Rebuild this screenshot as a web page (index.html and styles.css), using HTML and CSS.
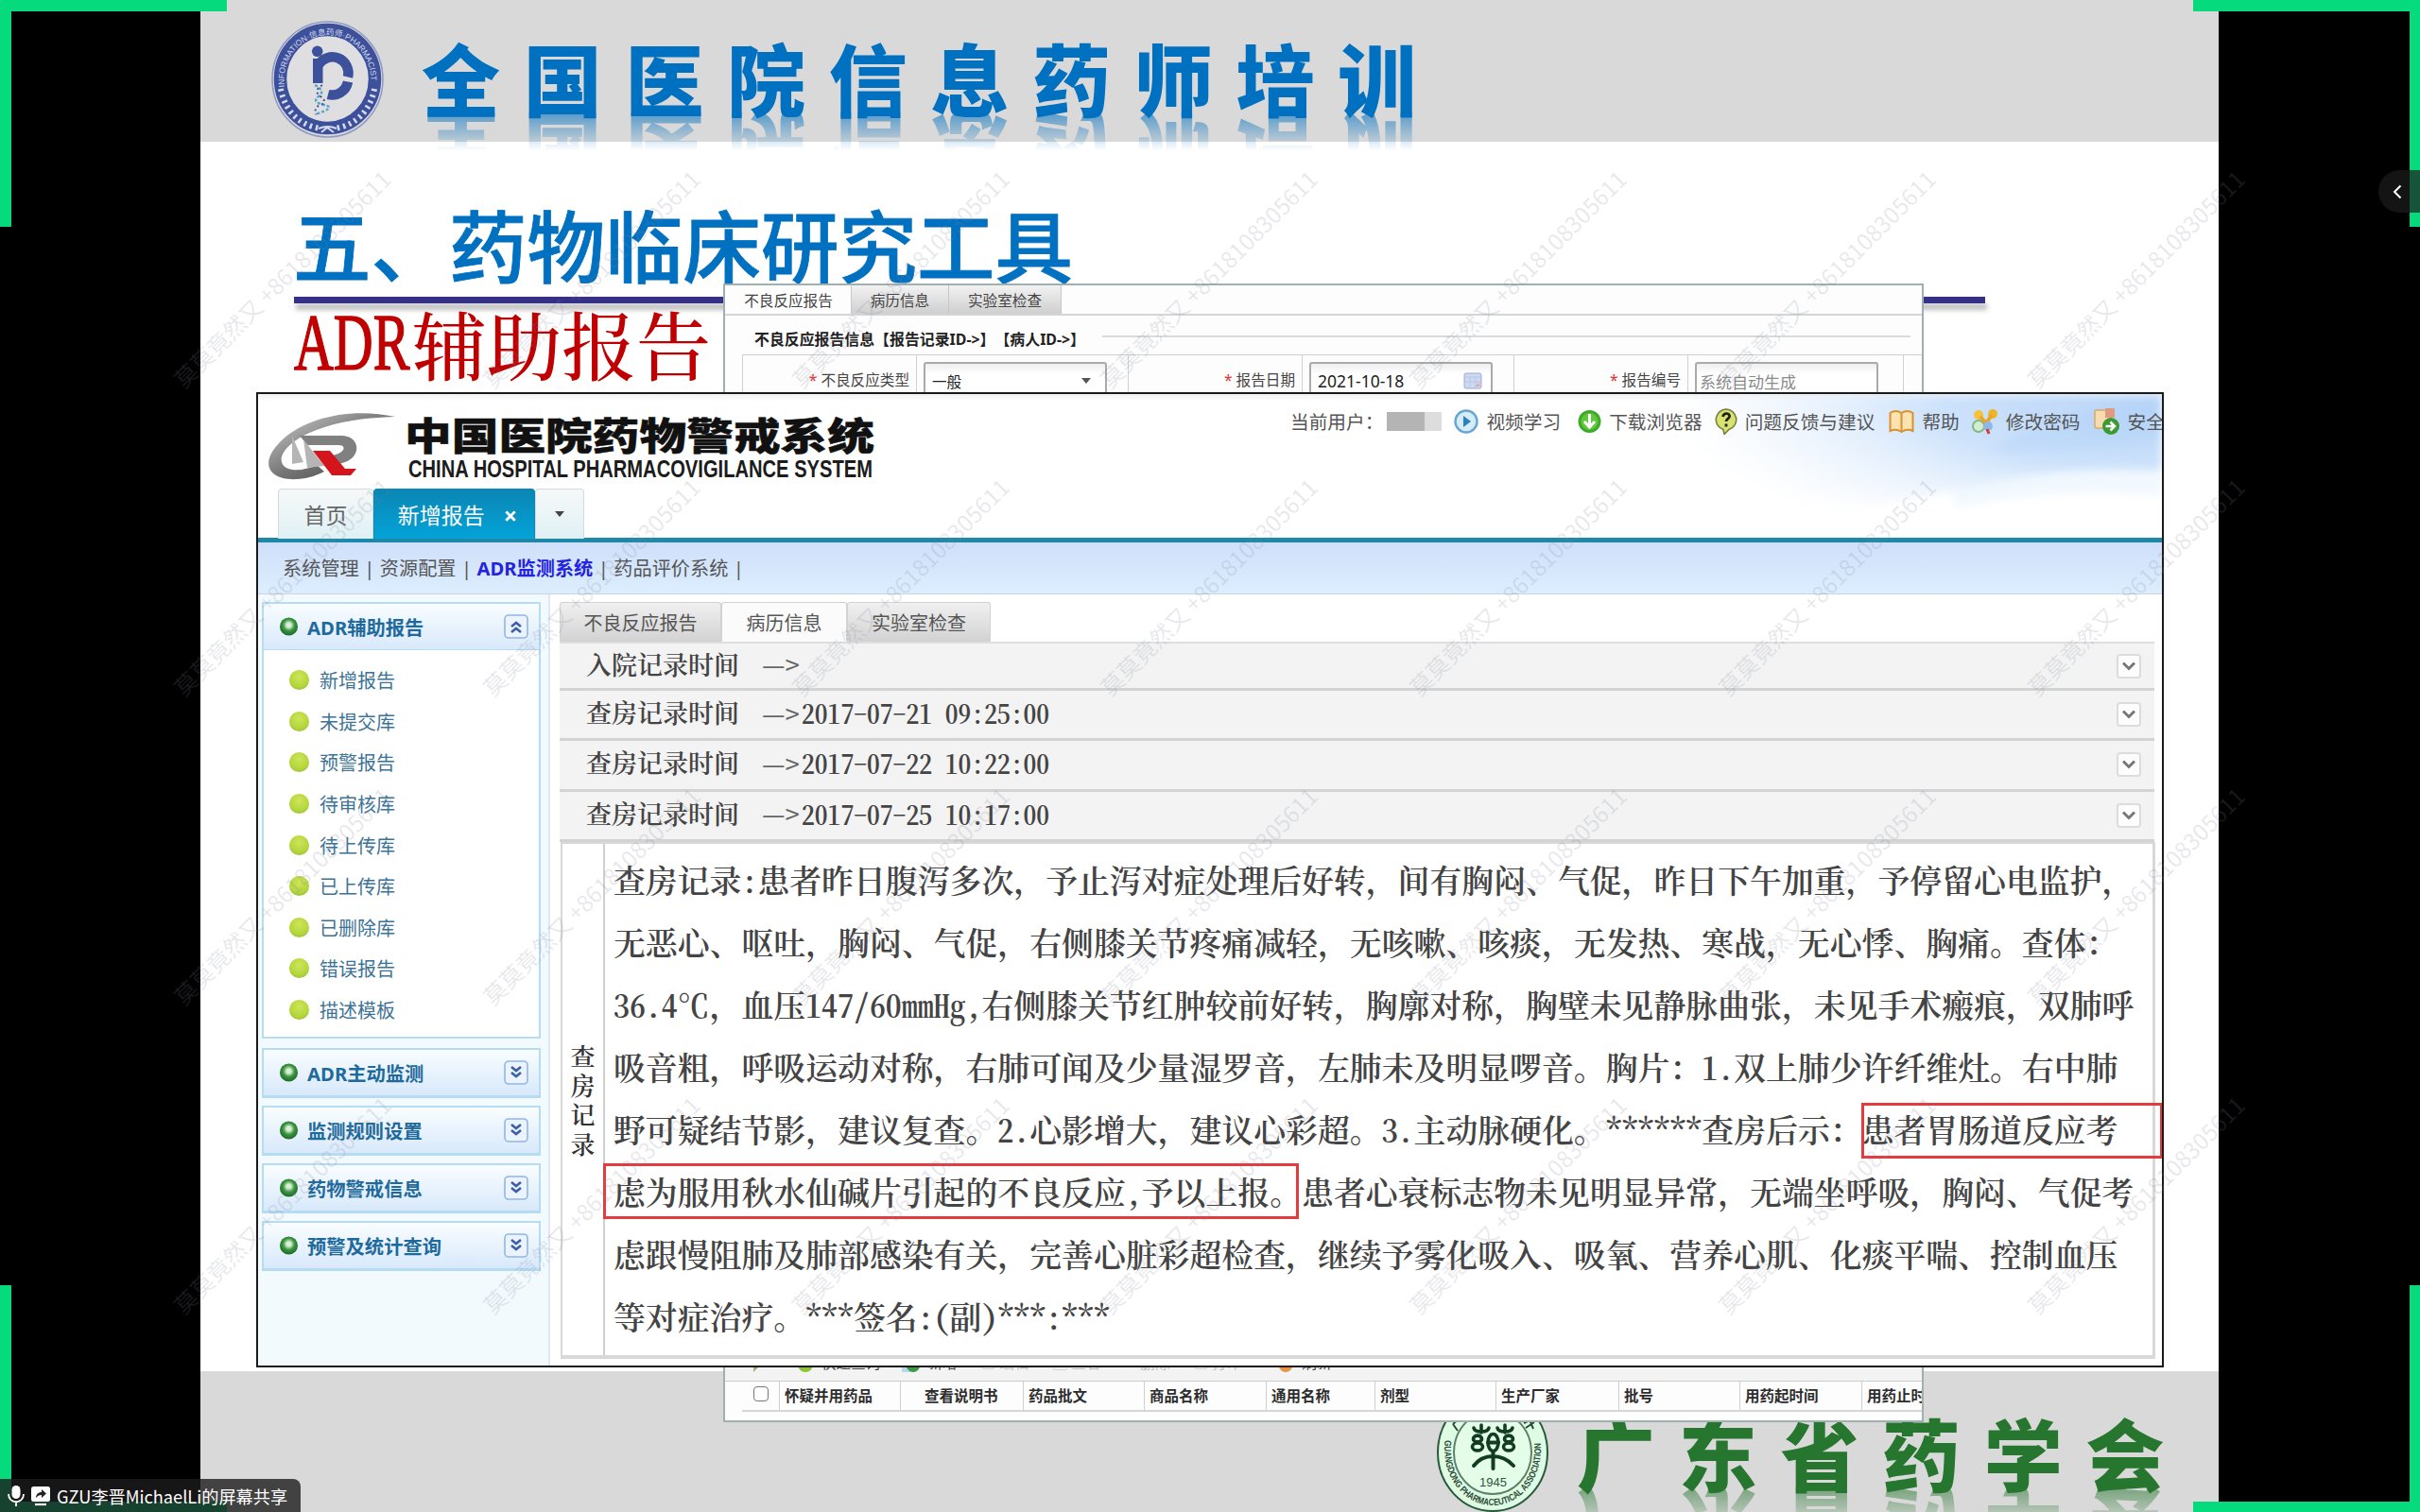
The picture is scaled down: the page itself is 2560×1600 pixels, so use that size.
FILE: index.html
```html
<!DOCTYPE html>
<html lang="zh-CN">
<head>
<meta charset="utf-8">
<title>全国医院信息药师培训</title>
<link rel="stylesheet" href="styles.css">
</head>
<body>
<svg width="0" height="0" class="defs">
  <defs>
    <radialGradient id="lime" cx=".5" cy=".35" r=".65"><stop offset="0" stop-color="#cfe558"/><stop offset=".75" stop-color="#b3d63c"/><stop offset="1" stop-color="#9fc43a"/></radialGradient>
    <radialGradient id="ring" cx=".5" cy=".42" r=".58"><stop offset=".2" stop-color="#d8f0d4"/><stop offset=".55" stop-color="#3b9440"/><stop offset="1" stop-color="#1c6a26"/></radialGradient>
    <radialGradient id="swoosh" cx="1" cy=".1" r="1"><stop offset="0" stop-color="#b9d5f8"/><stop offset=".45" stop-color="#cde2fb"/><stop offset="1" stop-color="#e6f1fd" stop-opacity="0"/></radialGradient>
    <linearGradient id="steel" x1="0" y1="0" x2="1" y2="1"><stop offset="0" stop-color="#d0d0d0"/><stop offset=".5" stop-color="#777"/><stop offset="1" stop-color="#3c3c3c"/></linearGradient>
    <symbol id="dot" viewBox="0 0 24 24"><circle cx="12" cy="12" r="11" fill="url(#lime)"/></symbol>
    <symbol id="bullet" viewBox="0 0 22 22"><circle cx="11" cy="11" r="10" fill="url(#ring)"/></symbol>
    <symbol id="down2" viewBox="0 0 26 26"><rect x="1" y="1" width="24" height="24" rx="4" fill="#eaf3fe" stroke="#93b5e6" stroke-width="1.6"/><path d="M8 7l5 4 5-4M8 13l5 4 5-4" fill="none" stroke="#3c5fa8" stroke-width="2.6"/></symbol>
    <symbol id="up2" viewBox="0 0 26 26"><rect x="1" y="1" width="24" height="24" rx="4" fill="#eaf3fe" stroke="#93b5e6" stroke-width="1.6"/><path d="M8 13l5-4 5 4M8 19l5-4 5 4" fill="none" stroke="#3c5fa8" stroke-width="2.6"/></symbol>
    <symbol id="chev" viewBox="0 0 26 26"><rect x="1" y="1" width="24" height="24" rx="3" fill="#fdfdfd" stroke="#dcdcdc" stroke-width="2"/><path d="M7 9.5l6 6 6-6" fill="none" stroke="#777" stroke-width="3"/></symbol>
  </defs>
</svg>

<main class="screen">
  <section class="slide">
    <header class="slide-head">
      <svg class="seal" viewBox="0 0 119 124">
        <ellipse cx="59.500" cy="62" rx="58.500" ry="61" fill="none" stroke="#8f99c4" stroke-width="1.500"/>
        <ellipse cx="59.500" cy="61.500" rx="50" ry="52" fill="#dfdfe1" stroke="#3d509b" stroke-width="13.500"/>
        <defs><path id="arc" d="M14 70A46 48 0 1 1 105 70"/></defs>
        <text font-size="8.500" fill="#d5daec" class="seal-text"><textPath href="#arc" textLength="155" lengthAdjust="spacingAndGlyphs">INFORMATION·信息药师·PHARMACIST</textPath></text>
        <path d="M10 72C14 94 28 110 52 114M109 72C105 94 91 110 67 114" fill="none" stroke="#d5daec" stroke-width="6" stroke-dasharray="2.500 4"/>
        <path d="M50 114q10-4 19 0M53 118l6-5 7 5" fill="none" stroke="#d5daec" stroke-width="2"/>
        <circle cx="48.700" cy="32.300" r="5.800" fill="#3d509b"/>
        <path d="M44 40h10.500v26H44z" fill="#3d509b"/>
        <path d="M50 46.500A17 17 0 0 1 81 59.500M81 64.500A17 17 0 0 1 60 78" fill="none" stroke="#3d509b" stroke-width="10.500"/>
        <path d="M46 68q12 6 4 12t6 9-10 10" fill="none" stroke="#57a5c9" stroke-width="2.500" stroke-dasharray="3 2"/>
        <path d="M54 68q-10 6-2 12t0 9-4 10" fill="none" stroke="#3d509b" stroke-width="2" stroke-dasharray="2 3"/>
      </svg>
      <h1 class="course">全国医院信息药师培训</h1>
    </header>
    <div class="slide-body">
      <h2 class="chapter">五、药物临床研究工具</h2>
      <div class="rule"></div>
      <p class="topic"><span class="topic-latin">ADR</span>辅助报告</p>
    </div>
    <footer class="slide-foot">
      <svg class="seal2" viewBox="0 0 118 126">
        <ellipse cx="59" cy="63" rx="58" ry="62" fill="#defbe4" stroke="#285a3a" stroke-width="2"/>
        <ellipse cx="59" cy="63" rx="41" ry="44" fill="#e4fde9" stroke="#5c8069" stroke-width="2"/>
        <defs><path id="arc2" d="M8.500 50C4 88 28 119 59 119S114 88 109.500 50"/></defs>
        <text font-size="10" font-weight="700" fill="#2c4a38"><textPath href="#arc2" textLength="190" lengthAdjust="spacingAndGlyphs">GUANGDONG PHARMACEUTICAL ASSOCIATION</textPath></text>
        <path d="M17 33l9-8M17 33l5 7M92 32l8-4M94 37l9-6M97 26l5 12" stroke="#2c4a38" stroke-width="2"/>
        <g fill="none" stroke="#123d22" stroke-width="3.600" stroke-linecap="round">
          <path d="M47 34v8M39 37q1 4 8 4t8-4M72 34v8M64 37q1 4 8 4t8-4"/>
          <ellipse cx="43" cy="48.500" rx="4.500" ry="3.400"/><ellipse cx="43" cy="57" rx="5.500" ry="4"/>
          <ellipse cx="76" cy="48.500" rx="4.500" ry="3.400"/><ellipse cx="76" cy="57" rx="5.500" ry="4"/>
          <ellipse cx="59.500" cy="52.500" rx="5.500" ry="9"/><path d="M54 52.500h11M59.500 62v18M39 77Q47 67 59 67 72 67 81 77" stroke-width="4"/>
        </g>
        <text x="59.500" y="99" font-size="13" text-anchor="middle" fill="#31543e">1945</text>
      </svg>
      <div class="society">广东省药学会</div>
    </footer>
  </section>

  <section class="win-back">
    <div class="b-tabs"><span class="b-tab on">不良反应报告</span><span class="b-tab t2">病历信息</span><span class="b-tab t3">实验室检查</span></div>
    <div class="b-legend"><span>不良反应报告信息【报告记录ID-&gt;】【病人ID-&gt;】</span><i></i></div>
    <div class="b-form">
      <div class="lab"><em>*</em>不良反应类型</div>
      <div class="val"><span class="box">一般<svg width="12" height="8" viewBox="0 0 12 8"><path d="M1 1h10l-5 6z" fill="#555"/></svg></span></div>
      <div class="lab"><em>*</em>报告日期</div>
      <div class="val"><span class="box date">2021-10-18<svg width="20" height="18" viewBox="0 0 20 18"><rect x="1" y="1" width="18" height="16" rx="2" fill="#cdd8f1" stroke="#9aa9d6"/><path d="M2 5h16M7 5v11M13 5v11M2 10h16" stroke="#b9c5e5"/><path d="M12 15l5-4v4z" fill="#e9a59d"/></svg></span></div>
      <div class="lab"><em>*</em>报告编号</div>
      <div class="val last"><span class="box ghost">系统自动生成</span></div>
    </div>
    <div class="b-gap"></div>
    <div class="b-tools">
      <svg width="14" height="22" viewBox="0 0 14 22"><path d="M3 21V8l9 4z" fill="#a5b070"/></svg>
      <svg class="i2" width="16" height="22" viewBox="0 0 16 22"><circle cx="8" cy="13" r="8" fill="#8cc52d"/></svg><span>快速查询</span>
      <svg class="i3" width="20" height="22" viewBox="0 0 20 22"><path d="M1 6h10v15H1z" fill="#b8d7ea"/><circle cx="13" cy="14" r="7" fill="#3c9a45"/></svg><span>新增</span>
      <span class="dim">▣ 编辑</span><span class="dim">▢ 查看</span><span class="dim"><b>✕</b> 删除</span><span class="dim">▤ 打印</span>
      <svg class="i4" width="14" height="22" viewBox="0 0 14 22"><circle cx="7" cy="14" r="7" fill="#ea9440"/></svg><span>刷新</span>
    </div>
    <div class="b-cols">
      <span class="ck"><i></i></span><span>怀疑并用药品</span><span class="mid">查看说明书</span><span>药品批文</span><span>商品名称</span><span>通用名称</span><span>剂型</span><span>生产厂家</span><span>批号</span><span>用药起时间</span><span>用药止时间</span>
    </div>
  </section>

  <section class="win">
    <header class="w-head">
      <svg class="swoosh" viewBox="0 0 560 152" preserveAspectRatio="none">
        <path d="M60 0H560V82C480 78 400 90 320 106 220 124 120 140 40 150z" fill="url(#swoosh)"/>
        <path d="M380 60C440 20 500 10 560 4V50C500 60 440 60 380 60z" fill="#abcff8" opacity=".3"/>
        <path d="M340 104C410 80 480 76 560 80V108C480 100 400 108 340 120z" fill="#eef6fe" opacity=".8"/>
      </svg>
      <div class="brand">
        <svg class="brand-mark" width="140" height="76" viewBox="0 0 140 76">
          <path d="M137 8C92-2 44 8 18 32-8 56 2 76 34 74c12-1 20-4 28-8l-8-7c-14 7-34 8-37-3C13 40 50 10 137 8z" fill="url(#steel)"/>
          <path d="M36 28h44c20 0 22 22 4 28l-12 4-7-9 12-4c8-4 7-9 0-9H44z" fill="#808080"/>
          <path d="M28 28l12 28-12 2zM40 32l22 28-18 2z" fill="#b5b5b5"/>
          <path d="M50 44h18l16 19 12 0-6 7H70z" fill="#d4161c"/>
        </svg>
        <svg width="500" height="70" viewBox="0 0 500 70" class="brand-name">
          <text x="0" y="37.500" font-size="40" font-weight="900" textLength="497" lengthAdjust="spacingAndGlyphs" fill="#111" stroke="#111" stroke-width=".5">中国医院药物警戒系统</text>
          <text x="4" y="67" class="en" font-size="25" font-weight="700" textLength="491" lengthAdjust="spacingAndGlyphs" fill="#1c1c1c">CHINA HOSPITAL PHARMACOVIGILANCE SYSTEM</text>
        </svg>
      </div>
      <div class="tools">
        <span class="t-user">当前用户：</span><i class="mask"></i>
        <svg width="26" height="28" viewBox="0 0 26 28"><circle cx="13" cy="14" r="11.500" fill="#d5ecfa" stroke="#68a5d2" stroke-width="2.400"/><path d="M10 8l8 6-8 6z" fill="#2f7fbf"/></svg><span class="t-video">视频学习</span>
        <svg width="25" height="26" viewBox="0 0 25 26"><circle cx="12.500" cy="13" r="12" fill="#3eaa2c"/><circle cx="12.500" cy="13" r="9" fill="#62c63c"/><path d="M12.500 5v14M7 13l5.500 6 5.500-6" stroke="#fff" stroke-width="3" fill="none"/></svg><span>下载浏览器</span>
        <svg width="24" height="28" viewBox="0 0 24 28"><path d="M12 1a11 11 0 0 1 3 21.500l-5 5-1-5A11 11 0 0 1 12 1z" fill="#d8e26e" stroke="#777f3c" stroke-width="1.600"/><path d="M8.500 9c1-5 8-4 7 0-.5 2-3.500 2.500-3.500 5M12 16.500v3" stroke="#222" stroke-width="2.800" fill="none"/></svg><span class="t-issue">问题反馈与建议</span>
        <svg width="27" height="26" viewBox="0 0 27 26"><path d="M1.500 4q6-4 12 0 6-4 12 0v19q-6-3-12 1-6-4-12-1z" fill="#fce3b0" stroke="#d9922f" stroke-width="2"/><path d="M13.500 4v20" stroke="#d9922f" stroke-width="2"/></svg><span>帮助</span>
        <svg width="28" height="28" viewBox="0 0 28 28"><circle cx="7" cy="19" r="6" fill="#d4ecd0" stroke="#7dbb86" stroke-width="2"/><circle cx="7" cy="7" r="5" fill="#f5c23a"/><circle cx="22" cy="6" r="5" fill="#f0b429"/><path d="M9 9l6 7 6-9" stroke="#e9a523" stroke-width="4" fill="none"/><circle cx="17" cy="19" r="5" fill="#8fb7e8"/><path d="M16 22l2 5" stroke="#d63a3a" stroke-width="3"/></svg><span>修改密码</span>
        <svg width="29" height="30" viewBox="0 0 29 30"><rect x="2" y="3" width="16" height="19" rx="2" fill="#f6dcae" stroke="#d9a865" stroke-width="1.500"/><rect x="13" y="1" width="10" height="10" fill="#e09a80"/><circle cx="19" cy="20" r="9" fill="#3c9a32"/><path d="M13.500 20h8M18.500 15.500l4.500 4.500-4.500 4.500" stroke="#fff" stroke-width="2.600" fill="none"/></svg><span>安全</span>
      </div>
      <nav class="tabs"><span class="tab home">首页</span><span class="tab cur">新增报告<b>×</b></span><span class="tab more"><svg width="12" height="8" viewBox="0 0 12 8"><path d="M1 1h10L6 7z" fill="#444"/></svg></span></nav>
    </header>
    <nav class="crumbs"><span>系统管理</span><i>|</i><span>资源配置</span><i>|</i><span class="hot">ADR监测系统</span><i>|</i><span>药品评价系统</span><i>|</i></nav>
    <div class="w-body">
      <aside class="side">
        <div class="acc open">
          <div class="acc-h"><svg class="bl"><use href="#bullet"/></svg><span>ADR辅助报告</span><svg class="btn"><use href="#up2"/></svg></div>
          <ul>
            <li><svg><use href="#dot"/></svg>新增报告</li><li><svg><use href="#dot"/></svg>未提交库</li><li><svg><use href="#dot"/></svg>预警报告</li>
            <li><svg><use href="#dot"/></svg>待审核库</li><li><svg><use href="#dot"/></svg>待上传库</li><li><svg><use href="#dot"/></svg>已上传库</li>
            <li><svg><use href="#dot"/></svg>已删除库</li><li><svg><use href="#dot"/></svg>错误报告</li><li><svg><use href="#dot"/></svg>描述模板</li>
          </ul>
        </div>
        <div class="acc"><div class="acc-h"><svg class="bl"><use href="#bullet"/></svg><span>ADR主动监测</span><svg class="btn"><use href="#down2"/></svg></div></div>
        <div class="acc"><div class="acc-h"><svg class="bl"><use href="#bullet"/></svg><span>监测规则设置</span><svg class="btn"><use href="#down2"/></svg></div></div>
        <div class="acc"><div class="acc-h"><svg class="bl"><use href="#bullet"/></svg><span>药物警戒信息</span><svg class="btn"><use href="#down2"/></svg></div></div>
        <div class="acc"><div class="acc-h"><svg class="bl"><use href="#bullet"/></svg><span>预警及统计查询</span><svg class="btn"><use href="#down2"/></svg></div></div>
      </aside>
      <div class="content">
        <div class="sub"><span class="s1">不良反应报告</span><span class="s2">病历信息</span><span class="s3">实验室检查</span></div>
        <div class="row first"><span>入院记录时间</span><u>—&gt;</u><svg><use href="#chev"/></svg></div>
        <div class="row"><span>查房记录时间</span><u>—&gt;</u><b>2017-07-21 09:25:00</b><svg><use href="#chev"/></svg></div>
        <div class="row"><span>查房记录时间</span><u>—&gt;</u><b>2017-07-22 10:22:00</b><svg><use href="#chev"/></svg></div>
        <div class="row"><span>查房记录时间</span><u>—&gt;</u><b>2017-07-25 10:17:00</b><svg><use href="#chev"/></svg></div>
        <div class="record">
          <div class="side-label"><span>查</span><span>房</span><span>记</span><span>录</span></div>
          <div class="note">
            <p>查房记录<s>:</s>患者昨日腹泻多次，予止泻对症处理后好转，间有胸闷、气促，昨日下午加重，予停留心电监护，</p>
            <p>无恶心、呕吐，胸闷、气促，右侧膝关节疼痛减轻，无咳嗽、咳痰，无发热、寒战，无心悸、胸痛。查体：</p>
            <p><s>36.4</s>℃，血压<s>147/60mmHg,</s>右侧膝关节红肿较前好转，胸廓对称，胸壁未见静脉曲张，未见手术瘢痕，双肺呼</p>
            <p>吸音粗，呼吸运动对称，右肺可闻及少量湿罗音，左肺未及明显啰音。胸片：<s>1.</s>双上肺少许纤维灶。右中肺</p>
            <p>野可疑结节影，建议复查。<s>2.</s>心影增大，建议心彩超。<s>3.</s>主动脉硬化。<s>******</s>查房后示：<mark class="m1">患者胃肠道反应考</mark></p>
            <p><mark class="m2">虑为服用秋水仙碱片引起的不良反应<s>,</s>予以上报。</mark>患者心衰标志物未见明显异常，无端坐呼吸，胸闷、气促考</p>
            <p>虑跟慢阻肺及肺部感染有关，完善心脏彩超检查，继续予雾化吸入、吸氧、营养心肌、化痰平喘、控制血压</p>
            <p>等对症治疗。<s>***</s>签名<s>:(</s>副<s>)***:***</s></p>
          </div>
        </div>
      </div>
    </div>
  </section>

  <div class="marks" aria-hidden="true">
    <span>莫莫竟然又 +8618108305611</span><span>莫莫竟然又 +8618108305611</span><span>莫莫竟然又 +8618108305611</span><span>莫莫竟然又 +8618108305611</span><span>莫莫竟然又 +8618108305611</span><span>莫莫竟然又 +8618108305611</span><span>莫莫竟然又 +8618108305611</span>
    <span>莫莫竟然又 +8618108305611</span><span>莫莫竟然又 +8618108305611</span><span>莫莫竟然又 +8618108305611</span><span>莫莫竟然又 +8618108305611</span><span>莫莫竟然又 +8618108305611</span><span>莫莫竟然又 +8618108305611</span><span>莫莫竟然又 +8618108305611</span>
    <span>莫莫竟然又 +8618108305611</span><span>莫莫竟然又 +8618108305611</span><span>莫莫竟然又 +8618108305611</span><span>莫莫竟然又 +8618108305611</span><span>莫莫竟然又 +8618108305611</span><span>莫莫竟然又 +8618108305611</span><span>莫莫竟然又 +8618108305611</span>
    <span>莫莫竟然又 +8618108305611</span><span>莫莫竟然又 +8618108305611</span><span>莫莫竟然又 +8618108305611</span><span>莫莫竟然又 +8618108305611</span><span>莫莫竟然又 +8618108305611</span><span>莫莫竟然又 +8618108305611</span><span>莫莫竟然又 +8618108305611</span>
  </div>

  <i class="corner tl"></i><i class="corner tr"></i><i class="corner bl-c"></i><i class="corner br"></i>
  <button class="pill"><svg width="10" height="16" viewBox="0 0 10 16"><path d="M8.500 1.500L2 8l6.500 6.500" fill="none" stroke="#fff" stroke-width="2"/></svg></button>
  <div class="share">
    <svg width="18" height="24" viewBox="0 0 18 24"><rect x="4.500" y="1" width="9" height="14" rx="4.500" fill="#fff"/><path d="M1 10c0 11 16 11 16 0M9 18v5" fill="none" stroke="#fff" stroke-width="1.800"/></svg>
    <svg width="22" height="22" viewBox="0 0 22 22"><rect x="1" y="1" width="20" height="16" rx="2.500" fill="#fff"/><path d="M5 20h12" stroke="#fff" stroke-width="2.200"/><path d="M6 13c0-4 3-6 6-6V4l5 4.500-5 4.500v-3c-3 0-4 1-6 3z" fill="#222"/></svg>
    <span>GZU李晋MichaelLi的屏幕共享</span>
  </div>
</main>
</body>
</html>
```

FILE: styles.css
```css
*, *::after { box-sizing: border-box; margin: 0; padding: 0; }
html, body { width: 2560px; height: 1600px; overflow: hidden; background: #000; }
body { font-family: "Noto Sans", "Noto Sans CJK SC", sans-serif; color: #333; text-spacing-trim: space-all; }
svg { display: block; flex: none; }
.defs { position: absolute; }
i, em { font-style: normal; }
u, s { text-decoration: none; }
.screen { position: relative; width: 2560px; height: 1600px; overflow: hidden; }

/* slide */
.slide { width: 2135px; height: 1600px; margin-left: 212px; background: #fff; display: flex; flex-direction: column; }
.slide-head { height: 150px; background: #d9d9d9; display: flex; align-items: flex-start; padding: 22px 0 0 75px; }
.seal { width: 119px; height: 124px; }
.seal-text { font-family: "Liberation Sans", "Noto Sans CJK SC", sans-serif; }
.course { margin: 17px 0 0 40px; font: 900 83px/84px "Noto Sans CJK SC", sans-serif; letter-spacing: 24.7px; color: #0070c0; white-space: nowrap; height: 84px; -webkit-box-reflect: below -4px linear-gradient(transparent 52%, rgba(0,0,0,.6)); }
.slide-body { height: 1301px; padding: 62px 0 0 98px; }
.chapter { font: 500 82.500px/90px "Noto Sans CJK SC", sans-serif; -webkit-text-stroke: .8px #0070c0; color: #0070c0; white-space: nowrap; }
.rule { width: 1789px; height: 7px; margin: 12px 0 0 1px; background: #353089; box-shadow: 2px 7px 5px rgba(0,0,0,.25); }
.topic { margin: -3px 0 0 1px; display: flex; font: 500 79px/90px "Noto Serif CJK SC", "Noto Sans CJK SC", serif; color: #c00000; white-space: nowrap; }
.topic-latin { width: 125px; font-family: "Liberation Serif", serif; font-size: 84px; transform: scaleX(.69); transform-origin: 0 50%; -webkit-text-stroke: 1.500px #c00000; }
.slide-foot { height: 149px; background: #d9d9d9; display: flex; padding-left: 1308px; overflow: hidden; }
.seal2 { width: 118px; height: 126px; margin-top: 23px; }
.seal2 text { font-family: "Liberation Sans", "Noto Sans CJK SC", sans-serif; }
.society { margin: 43px 0 0 30px; height: 84px; font: 900 83px/84px "Noto Sans CJK SC", sans-serif; letter-spacing: 24.700px; color: #26762f; white-space: nowrap; -webkit-box-reflect: below -4px linear-gradient(transparent 50%, rgba(0,0,0,.55)); }

/* form window behind */
.win-back { position: absolute; left: 765px; top: 300px; width: 1270px; height: 1205px; background: #fdfdfd; border: 2px solid #9fb0b0; overflow: hidden; font-size: 15.600px; }
.b-tabs { display: flex; height: 32px; border-bottom: 2px solid #d3d6d6; padding-left: 1px; line-height: 32px; text-align: center; color: #444; }
.b-tab { border-right: 1px solid #c8c8c8; background: linear-gradient(#f2f2f2, #cfcfcf); }
.b-tab.on { width: 133px; background: #fdfdfd; }
.t2 { width: 103px; }
.t3 { width: 119px; }
.b-legend { display: flex; align-items: center; gap: 18px; height: 41px; padding: 7px 12px 0 31px; font-size: 15.900px; font-weight: 700; color: #222; white-space: nowrap; }
.b-legend i { flex: 1; height: 2px; background: #d8dcdc; margin-top: -4px; }
.b-form { display: grid; grid-template-columns: 184px 224px 184px 224px 184px 228px; margin-left: 18px; height: 72px; border: 1px solid #cdd1d1; border-right: 0; color: #444; }
.b-form > div { border-right: 1px solid #cdd1d1; padding-top: 7px; }
.lab { text-align: right; padding-right: 7px; line-height: 38px; }
.lab em { color: #e03030; margin-right: 4px; }
.val { padding-left: 7px; }
.box { display: flex; align-items: center; justify-content: space-between; width: 194px; height: 40px; padding: 0 14px 0 7px; border: 2px solid #aaa; border-radius: 3px; background: linear-gradient(#eee, #fff 30%); color: #222; }
.date { font-size: 17.500px; padding-right: 9px; }
.ghost { color: #8a8a8a; font-size: 17px; padding-left: 3px; }
.b-gap { height: 983px; }
.b-tools { display: flex; align-items: center; height: 32px; padding: 0 0 8px 27px; background: #f3f3f3; border-bottom: 1px solid #ccc; color: #444; white-space: nowrap; }
.b-tools .i2 { margin: 0 9px 0 36px; }
.b-tools .i3 { margin: 0 8px 0 22px; }
.b-tools .i4 { margin: 0 10px 0 40px; }
.dim { color: #bdbdbd; margin-left: 25px; }
.dim b { color: #e09a9a; }
.b-cols { display: grid; grid-template-columns: 40px 128px 130px 128px 129px 115px 128px 130px 128px 129px 140px; height: 32px; margin-left: 18px; border-bottom: 2px solid #d6d6d6; font-weight: 600; font-size: 15.500px; line-height: 31px; color: #2c2c2c; white-space: nowrap; }
.b-cols span { border-right: 1px solid #cfcfcf; padding-left: 5px; }
.b-cols .mid { padding-left: 25px; }
.ck i { display: block; width: 16px; height: 16px; margin: 5px 0 0 7px; border: 1.500px solid #777; border-radius: 4px; background: #fff; }

/* pharmacovigilance window */
.win { position: absolute; left: 271px; top: 415px; width: 2018px; height: 1032px; border: 2.500px solid #1a1a1a; background: #fff; display: flex; flex-direction: column; overflow: hidden; }
.w-head { position: relative; flex: none; height: 157px; border-bottom: 5px solid #1e88a8; background: linear-gradient(#f1f1f1, #fff 8px); display: grid; grid-template-columns: 1092px 1fr; grid-template-rows: 100px 1fr; }
.swoosh { position: absolute; right: 0; top: 0; width: 560px; height: 152px; filter: blur(5px); }
.brand { display: flex; padding: 16px 0 0 8px; }
.brand-name { margin-left: 7px; margin-top: 5px; }
.brand-name text { font-family: "Noto Sans CJK SC", sans-serif; }
.brand-name .en { font-family: "Liberation Sans", sans-serif; }
.tools { position: relative; display: flex; align-items: center; height: 57px; font-size: 19.700px; color: #555; white-space: nowrap; }
.tools span { margin: 0 13px 0 8px; }
.tools .t-user { margin: 0 4px 0 0; }
.tools .t-video { margin-right: 18px; }
.tools .t-issue { margin-right: 15px; }
.mask { width: 58px; height: 20px; margin-right: 13px; background: linear-gradient(90deg, #b4b4b4 68%, #ddd 70%); }
.tabs { display: flex; grid-column: 1 / 3; align-self: end; padding-left: 21px; font-size: 23px; line-height: 54px; height: 53px; }
.tab { border: 1px solid #d3dbde; border-bottom: 0; border-radius: 4px 4px 0 0; background: linear-gradient(#f6f8f8, #dff1f5); color: #666; text-align: center; }
.home { width: 101px; }
.cur { width: 171px; background: linear-gradient(#0a86b4, #04a3d8); border-color: #0b8ab8; color: #fff; display: flex; justify-content: center; gap: 20px; padding-left: 7px; }
.cur b { font-size: 25px; }
.more { width: 52px; display: flex; align-items: center; justify-content: center; }
.crumbs { flex: none; height: 55px; background: linear-gradient(#cfdffa, #dceefe); border-bottom: 1px solid #c8d4e4; display: flex; padding-left: 26px; font-size: 20.200px; line-height: 54px; color: #555; }
.crumbs i { width: 22px; text-align: center; }
.crumbs .hot { color: #2424e0; font-weight: 700; }
.w-body { flex: 1; display: flex; min-height: 0; }
.side { width: 309px; background: #f2fafe; border-right: 2px solid #dfe6fa; padding: 8px 8px 0 4px; display: flex; flex-direction: column; gap: 8px; }
.acc { border: 2px solid #b5dcf3; background: #fff; height: 53px; flex: none; }
.acc.open { height: 462px; margin-bottom: 2px; }
.acc-h { height: 49px; display: flex; align-items: center; padding: 0 11px 0 16px; background: linear-gradient(#f9fdff, #d8e9fb); color: #1f6a9c; font-size: 20.300px; font-weight: 700; white-space: nowrap; border-bottom: 1px solid #b5dcf3; }
.acc-h .bl { width: 21px; height: 22px; }
.acc-h span { flex: 1; margin-left: 9px; }
.acc-h .btn { width: 26px; height: 26px; }
.acc ul { list-style: none; padding: 10px 0 0 26px; }
.acc li { display: flex; align-items: center; height: 43.600px; gap: 10px; font-size: 20px; color: #3d7396; }
.acc li svg { width: 23px; height: 23px; }
.content { flex: 1; padding: 8px 0 0 10px; min-width: 0; }
.sub { display: flex; height: 42px; font-size: 20px; line-height: 44px; text-align: center; color: #555; }
.sub span { border: 1px solid #d2d2d2; border-bottom: 0; border-radius: 3px 3px 0 0; background: linear-gradient(#f0f0f0, #d2d2d2); }
.sub .s1 { width: 171px; }
.sub .s2 { width: 133px; background: #fbfbfb; }
.sub .s3 { width: 152px; }
.row { display: flex; align-items: center; height: 53.300px; width: 1687px; padding: 0 14px 0 28px; background: #f3f3f3; border-bottom: 3px solid #d3d3d3; font: 600 27px/40px "Noto Serif CJK SC", "Noto Sans CJK SC", serif; color: #444; white-space: nowrap; }
.row.first { height: 52px; border-top: 2px solid #dedede; }
.row span { margin-top: -4px; }
.row u { width: 42px; margin: -5px 0 0 24px; font: 400 27.500px "Noto Sans CJK SC", sans-serif; color: #666; }
.row b { font: 600 27.600px/40px "Noto Serif CJK SC", "Liberation Mono", monospace; font-feature-settings: "hwid"; margin-top: -4px; }
.row svg { width: 26px; height: 26px; margin-left: auto; }
.record { display: grid; grid-template-columns: 45px 1fr; height: 547px; width: 1687px; margin-left: 1px; border: 2px solid #d8d8d8; border-right-width: 3px; border-bottom-width: 4px; }
.side-label { border-right: 2px solid #cfcfcf; display: flex; flex-direction: column; align-items: center; justify-content: center; font: 600 26px/30.700px "Noto Serif CJK SC", "Noto Sans CJK SC", serif; padding-top: 1px; }
.note { padding: 5px 0 0 9px; font: 600 33.870px/66px "Noto Serif CJK SC", "Noto Sans CJK SC", serif; color: #444; }
.note p { height: 66px; white-space: nowrap; }
.note s { font-feature-settings: "hwid"; }
mark { position: relative; color: inherit; background: none; }
mark::after { content: ""; position: absolute; border: 3px solid #e43b3f; }
.m1::after { left: -1px; right: -47px; top: -3px; height: 59px; }
.m2::after { left: -11px; right: 3px; top: -5px; height: 59px; }

/* meeting overlays */
.marks { position: absolute; left: 135px; top: 131px; display: grid; grid-template-columns: repeat(7, 326.700px); grid-auto-rows: 326.600px; place-items: center; font: 400 24px "Noto Sans CJK SC", sans-serif; color: rgba(128,132,155,.19); white-space: nowrap; }
.marks span { transform: rotate(-45deg); }
.corner { position: absolute; width: 240px; height: 240px; border: 0 solid #05da7d; }
.tl { left: 0; top: 0; border-width: 12px 0 0 12px; }
.tr { right: 0; top: 0; border-width: 12px 11px 0 0; }
.bl-c { left: 0; bottom: 0; border-width: 0 0 11px 12px; }
.br { right: 0; bottom: 0; border-width: 0 11px 11px 0; }
.pill { position: absolute; right: 0; top: 180px; width: 44px; height: 45px; border: 0; border-radius: 23px 0 0 23px; background: rgba(28,28,28,.7); display: flex; align-items: center; padding-left: 15px; }
.share { position: absolute; left: 0; bottom: 0; width: 318px; height: 35px; border-radius: 0 8px 0 0; background: rgba(28,28,28,.8); display: flex; align-items: center; gap: 6px; padding-left: 8px; color: #fff; font: 400 18.200px "Noto Sans CJK SC", sans-serif; white-space: nowrap; }
```
